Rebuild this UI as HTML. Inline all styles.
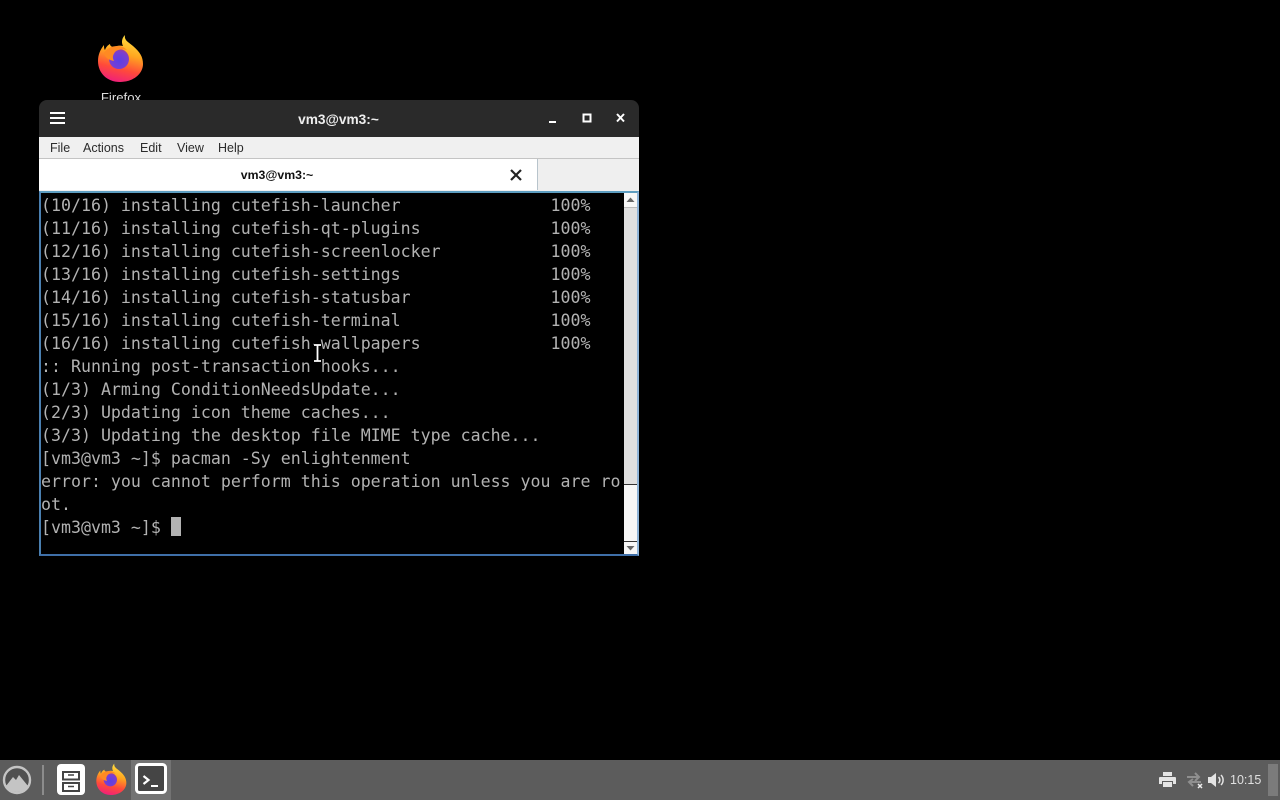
<!DOCTYPE html>
<html><head><meta charset="utf-8"><style>
html,body{margin:0;padding:0;width:1280px;height:800px;background:#000;overflow:hidden;font-family:"Liberation Sans",sans-serif}
div,span,svg{position:absolute}
.t{font-family:"DejaVu Sans Mono",monospace;font-size:16.6px;color:#b2b2b2;white-space:pre;left:41px;line-height:23px;height:23px}
.m{top:140px;font-size:12.5px;color:#2b2b2b;line-height:16px;white-space:pre}
</style></head><body>
<!-- desktop firefox -->
<svg style="left:96px;top:34px" width="48" height="48" viewBox="0 0 48 48">
<defs><linearGradient id="f" x1="0.65" y1="0" x2="0.4" y2="1"><stop offset="0" stop-color="#ffe040"/><stop offset=".4" stop-color="#ffa51f"/><stop offset=".72" stop-color="#ff4a3a"/><stop offset="1" stop-color="#f0207a"/></linearGradient>
<radialGradient id="p" cx=".5" cy=".6" r=".6"><stop offset="0" stop-color="#5a3fe6"/><stop offset=".75" stop-color="#7a3fd0"/><stop offset="1" stop-color="#a03f98"/></radialGradient></defs>
<path d="M29 1c-1 5 3 7 8 11 7 6 10 11 10 18 0 10-10 18-23 18C11 48 2 39 2 27c0-6 2-11 6-16 0 2 0 4 1 5 1-3 3-5 5-6 0 2 2 3 4 3 2-1 5-2 9-1-2-4-1-8 2-11z" fill="url(#f)"/>
<circle cx="23" cy="25" r="10" fill="url(#p)"/>
<path d="M8 19c3-5 8-7 14-7 3 0 6 1 9 4-4-1-9-1-12 2-2 3-3 5-1 9-5-1-9-3-10-8z" fill="#ff8a22"/>
</svg>
<div style="left:90px;top:90px;width:62px;height:10px;overflow:hidden;text-align:center;color:#ddd;font-size:13.2px;line-height:15px">Firefox</div>
<!-- window -->
<div style="left:39px;top:100px;width:600px;height:456px;background:#000;border-radius:8px 8px 0 0;overflow:hidden">
<div style="left:0;top:0;width:600px;height:37px;background:#2a2a2a"></div>
<div style="left:0;top:37px;width:600px;height:21px;background:#f0f0f0"></div>
<div style="left:0;top:58px;width:600px;height:33px;background:#efefef;border-top:1px solid #c4c4c4;box-sizing:border-box"></div>
<div style="left:0;top:59px;width:499px;height:31px;background:#fff;border-right:1px solid #b8c4cc;box-sizing:border-box"></div>
<div style="left:0;top:91px;width:600px;height:365px;background:#000;box-sizing:border-box;border:2px solid #4a7fb0;border-top-color:#5d9dc0;border-right-color:#8fb4d8;border-bottom-color:#3f6fa8"></div>
</div>
<svg style="left:50px;top:111px" width="15" height="14"><path d="M0 2h15M0 7h15M0 12h15" stroke="#fff" stroke-width="2"/></svg>
<div style="left:139px;top:111px;width:399px;text-align:center;color:#eee;font-size:13.700px;font-weight:bold;line-height:17px">vm3@vm3:~</div>
<svg style="left:545px;top:110px" width="84" height="16" fill="none" stroke="#fff" stroke-width="2"><path d="M4 12h7"/><rect x="38.500" y="4.500" width="7" height="7"/><path d="M72 4l7 7.500M79 4l-7 7.500"/></svg>
<span class="m" style="left:50px">File</span><span class="m" style="left:83px">Actions</span><span class="m" style="left:140px">Edit</span><span class="m" style="left:177px">View</span><span class="m" style="left:218px">Help</span>
<div style="left:39px;top:167px;width:476px;text-align:center;color:#111;font-size:12.300px;font-weight:bold;line-height:16px">vm3@vm3:~</div>
<svg style="left:509px;top:168px" width="14" height="14"><path d="M2 2l10 10M12 2L2 12" stroke="#222" stroke-width="2.200"/></svg>
<!-- terminal -->
<div class="t" style="top:194px">(10/16) installing cutefish-launcher               100%</div>
<div class="t" style="top:217px">(11/16) installing cutefish-qt-plugins             100%</div>
<div class="t" style="top:240px">(12/16) installing cutefish-screenlocker           100%</div>
<div class="t" style="top:263px">(13/16) installing cutefish-settings               100%</div>
<div class="t" style="top:286px">(14/16) installing cutefish-statusbar              100%</div>
<div class="t" style="top:309px">(15/16) installing cutefish-terminal               100%</div>
<div class="t" style="top:332px">(16/16) installing cutefish-wallpapers             100%</div>
<div class="t" style="top:355px">:: Running post-transaction hooks...</div>
<div class="t" style="top:378px">(1/3) Arming ConditionNeedsUpdate...</div>
<div class="t" style="top:401px">(2/3) Updating icon theme caches...</div>
<div class="t" style="top:424px">(3/3) Updating the desktop file MIME type cache...</div>
<div class="t" style="top:447px">[vm3@vm3 ~]$ pacman -Sy enlightenment</div>
<div class="t" style="top:470px">error: you cannot perform this operation unless you are ro</div>
<div class="t" style="top:493px">ot.</div>
<div class="t" style="top:516px">[vm3@vm3 ~]$</div>
<div style="left:171px;top:517px;width:10px;height:19px;background:#b2b2b2"></div>
<!-- scrollbar -->
<div style="left:624px;top:193px;width:13px;height:361px;background:#f7f7f7"></div>
<div style="left:624px;top:207px;width:13px;height:278px;background:#dfdfdf;border-top:1px solid #bbb;border-bottom:1px solid #333;box-sizing:border-box"></div>
<div style="left:624px;top:541px;width:13px;height:1px;background:#333"></div>
<svg style="left:624px;top:194px" width="13" height="12"><path d="M2.500 8L6.500 3.500 10.500 8z" fill="#666"/></svg>
<svg style="left:624px;top:542px" width="13" height="12"><path d="M2.500 4L6.500 8.500 10.500 4z" fill="#666"/></svg>
<!-- I-beam cursor -->
<svg style="left:312px;top:343px" width="11" height="20"><path d="M2 2h7M5.500 2v16M2 18h7" stroke="#000" stroke-width="3.500"/><path d="M2 2h7M5.500 2v16M2 18h7" stroke="#fff" stroke-width="1.800"/></svg>
<!-- panel -->
<div style="left:0;top:760px;width:1280px;height:40px;background:#5c5c5c"></div>
<div style="left:131px;top:760px;width:40px;height:40px;background:#737373"></div>
<svg style="left:2px;top:765px" width="30" height="30" viewBox="0 0 30 30"><circle cx="15" cy="15" r="13" fill="#505050" stroke="#c4c4c4" stroke-width="2.400"/><path d="M4 21l7-9 3 3 3-5 9 11c-2 4-6 6-11 6s-9-2-11-6z" fill="#c4c4c4"/></svg>
<div style="left:42px;top:765px;width:2px;height:30px;background:#8c8c8c"></div>
<svg style="left:57px;top:764px" width="28" height="31" viewBox="0 0 28 31"><rect width="28" height="31" rx="4" fill="#fff"/><rect x="6" y="8" width="16" height="7.500" fill="none" stroke="#444" stroke-width="2"/><rect x="6" y="19" width="16" height="8" fill="none" stroke="#444" stroke-width="2"/><path d="M11 11h6M11 22.500h6" stroke="#444" stroke-width="1.600"/></svg>
<svg style="left:95px;top:763px" width="32" height="32" viewBox="0 0 48 48">
<path d="M29 1c-1 5 3 7 8 11 7 6 10 11 10 18 0 10-10 18-23 18C11 48 2 39 2 27c0-6 2-11 6-16 0 2 0 4 1 5 1-3 3-5 5-6 0 2 2 3 4 3 2-1 5-2 9-1-2-4-1-8 2-11z" fill="url(#f)"/>
<circle cx="23" cy="25" r="10" fill="url(#p)"/>
<path d="M8 19c3-5 8-7 14-7 3 0 6 1 9 4-4-1-9-1-12 2-2 3-3 5-1 9-5-1-9-3-10-8z" fill="#ff8a22"/></svg>
<svg style="left:135px;top:763px" width="32" height="31" viewBox="0 0 32 31"><rect x="1.500" y="1.500" width="29" height="28" rx="3" fill="#454545" stroke="#fff" stroke-width="3"/><path d="M8.500 13l5 4-5 4" fill="none" stroke="#fff" stroke-width="2.200"/><path d="M16 23h7" stroke="#fff" stroke-width="2"/></svg>
<svg style="left:1159px;top:772px" width="17" height="16" viewBox="0 0 17 16"><path d="M4 0h9v4H4zM1 5h15a1 1 0 0 1 1 1v6h-3V9H3v3H0V6a1 1 0 0 1 1-1zM4 10h9v5H4z" fill="#e4e4e4"/></svg>
<svg style="left:1186px;top:772px" width="18" height="17" viewBox="0 0 18 17" fill="none" stroke="#8f8f8f" stroke-width="2"><path d="M1 5h11M9 1l4 4-4 4M15 10H4M7 7l-4 3 4 4"/><path d="M12 12l4 4M16 12l-4 4" stroke="#eee" stroke-width="1.500"/></svg>
<svg style="left:1208px;top:772px" width="17" height="16" viewBox="0 0 17 16"><path d="M0 5h3l5-4v14l-5-4H0z" fill="#e4e4e4"/><path d="M10.500 5a4 4 0 0 1 0 6M13 3a7 7 0 0 1 0 10" fill="none" stroke="#e4e4e4" stroke-width="1.500"/></svg>
<div style="left:1230px;top:772px;color:#e0e0e0;font-size:12.500px;line-height:16px">10:15</div>
<div style="left:1268px;top:764px;width:10px;height:32px;background:#7b7b7b"></div>
</body></html>
